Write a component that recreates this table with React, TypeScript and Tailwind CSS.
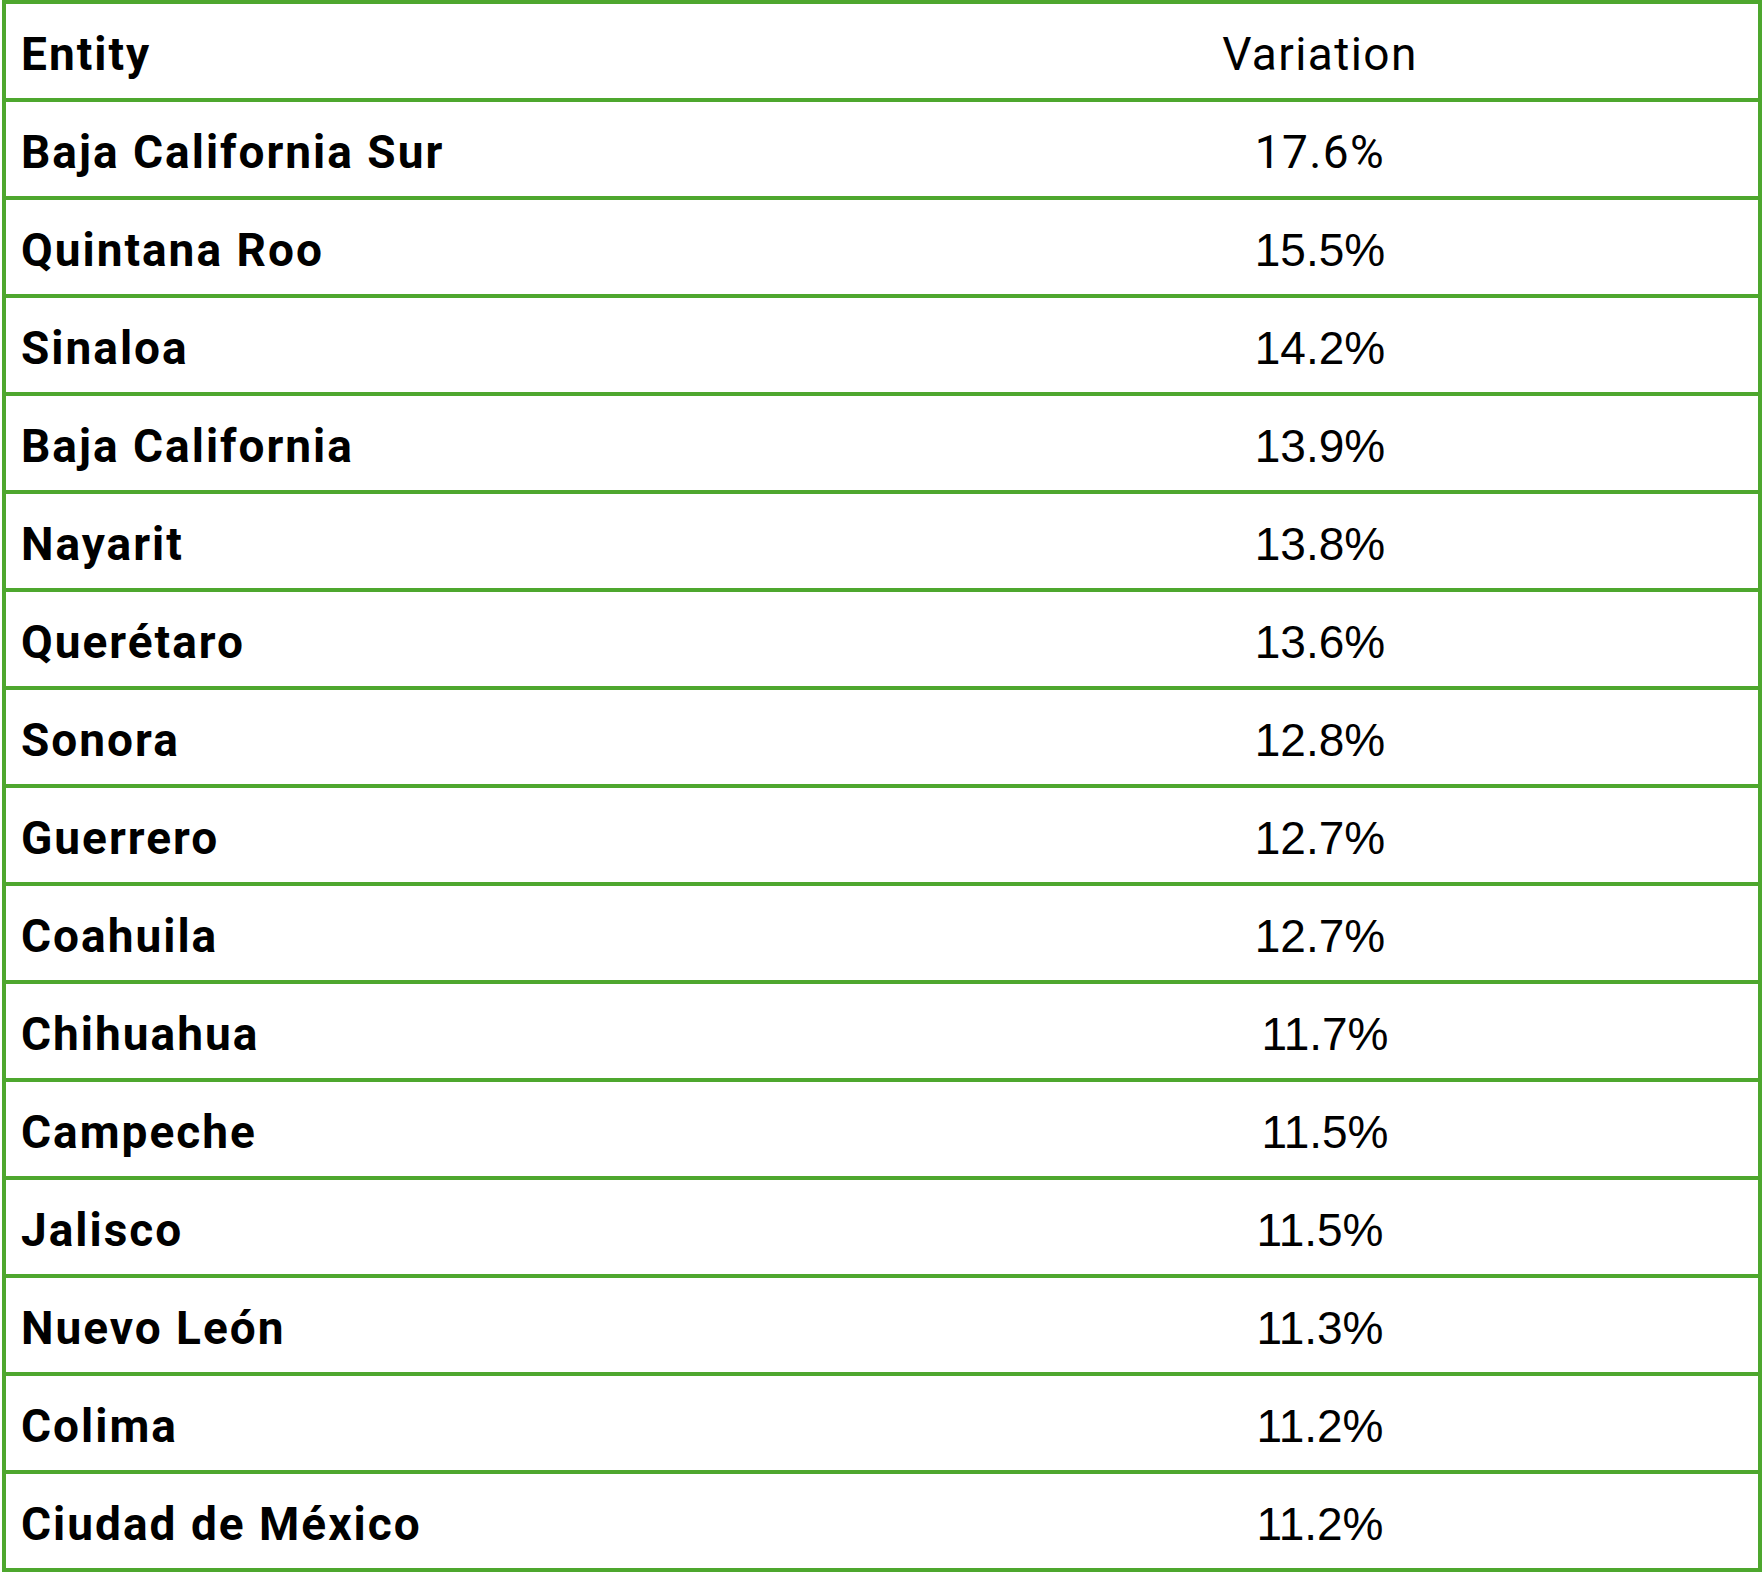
const rows: { name: string; value: string; shift?: boolean; alt?: boolean }[] = [
  { name: 'Baja California Sur', value: '17.6%', alt: true },
  { name: 'Quintana Roo', value: '15.5%' },
  { name: 'Sinaloa', value: '14.2%' },
  { name: 'Baja California', value: '13.9%' },
  { name: 'Nayarit', value: '13.8%' },
  { name: 'Querétaro', value: '13.6%' },
  { name: 'Sonora', value: '12.8%' },
  { name: 'Guerrero', value: '12.7%' },
  { name: 'Coahuila', value: '12.7%' },
  { name: 'Chihuahua', value: '11.7%', shift: true },
  { name: 'Campeche', value: '11.5%', shift: true },
  { name: 'Jalisco', value: '11.5%' },
  { name: 'Nuevo León', value: '11.3%' },
  { name: 'Colima', value: '11.2%' },
  { name: 'Ciudad de México', value: '11.2%' },
];

function Row({ name, value, shift, alt, header }: { name: string; value: string; shift?: boolean; alt?: boolean; header?: boolean }) {
  return (
    <div className="flex h-[98px] items-center border-b-4 border-[#4ea72e] pt-[5px]">
      <div className="w-1/2 pl-[15px] font-['Roboto',sans-serif] text-[46px] font-bold leading-none tracking-[2px] text-black">
        {name}
      </div>
      <div
        className={
          'w-1/2 text-center text-[46px] leading-none text-black ' +
          (header || alt ? "font-['Roboto',sans-serif] tracking-[1.4px] " : "font-['Liberation_Sans',Arial,sans-serif] ") +
          (shift ? 'pl-[10px]' : '')
        }
      >
        {value}
      </div>
    </div>
  );
}

export default function App() {
  return (
    <div className="min-h-[1584px] w-[1764px] bg-white pl-[2px]">
      <div className="w-[1760px] border-x-4 border-t-4 border-[#4ea72e]">
        <Row name="Entity" value="Variation" header />
        {rows.map((r) => (
          <Row key={r.name} {...r} />
        ))}
      </div>
    </div>
  );
}
